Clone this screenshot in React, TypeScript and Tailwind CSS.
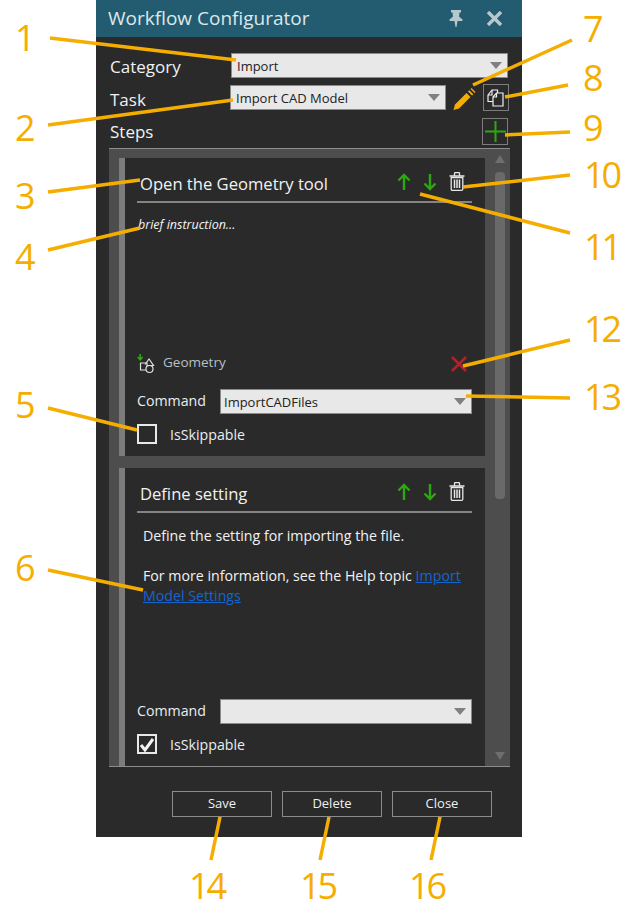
import type { ReactNode } from 'react'

const ui = "font-['Open_Sans',sans-serif]"

const callouts = [
  { text: '1', pos: 'left-[15px] top-[14px]' },
  { text: '2', pos: 'left-[15px] top-[104px]' },
  { text: '3', pos: 'left-[15px] top-[172px]' },
  { text: '4', pos: 'left-[15px] top-[233px]' },
  { text: '5', pos: 'left-[15px] top-[381px]' },
  { text: '6', pos: 'left-[15px] top-[544px]' },
  { text: '7', pos: 'left-[583px] top-[5px]' },
  { text: '8', pos: 'left-[583px] top-[54px]' },
  { text: '9', pos: 'left-[583px] top-[104px]' },
  { text: '10', pos: 'left-[584px] top-[151px]' },
  { text: '11', pos: 'left-[584px] top-[223px]' },
  { text: '12', pos: 'left-[584px] top-[305px]' },
  { text: '13', pos: 'left-[584px] top-[373px]' },
  { text: '14', pos: 'left-[189px] top-[862px]' },
  { text: '15', pos: 'left-[300px] top-[862px]' },
  { text: '16', pos: 'left-[409px] top-[862px]' },
]

const leaders = [
  [50, 38, 236, 60],
  [48, 125, 233, 100],
  [48, 192, 140, 180],
  [48, 250, 140, 228],
  [48, 408, 137, 430],
  [48, 570, 143, 590],
  [572, 40, 473, 85],
  [568, 85, 505, 97],
  [570, 132, 505, 135],
  [570, 175, 463, 187],
  [570, 233, 420, 194],
  [570, 340, 463, 366],
  [570, 398, 466, 396],
  [220, 817, 211, 860],
  [329, 817, 320, 860],
  [440, 817, 431, 860],
]

function Dropdown({ value, className }: { value?: string; className: string }) {
  return (
    <div className={`flex items-center justify-between bg-[#e8e8e8] border border-[#8a8a8a] text-[#222] text-[13px] leading-none pr-[5px] ${className}`}>
      <span className="mt-[2px]">{value}</span>
      <span className="w-0 h-0 border-x-[6px] border-x-transparent border-t-[7px] border-t-[#808080]" />
    </div>
  )
}

function ArrowIcon({ down }: { down?: boolean }) {
  return (
    <svg width="14" height="18" viewBox="0 0 14 18" fill="none" stroke="#2ea80f" strokeWidth="2.4">
      {down ? <path d="M7 1v15M1.5 10.5 7 16l5.5-5.5" /> : <path d="M7 17V2M1.5 7.5 7 2l5.5 5.5" />}
    </svg>
  )
}

function TrashIcon() {
  return (
    <svg width="16" height="19" viewBox="0 0 16 19" fill="none" stroke="#e6e6e6" strokeWidth="1.3">
      <path d="M.5 4h15M5.500 3.500v-2c0-.6.4-1 1-1h3c.6 0 1 .4 1 1v2" />
      <path d="M2.200 5.500h11.600V17c0 .8-.5 1.300-1.300 1.300h-9c-.8 0-1.300-.5-1.300-1.300z" />
      <path d="M5.500 7.500v8.500M8 7.500v8.500M10.500 7.500v8.500" strokeWidth="1.5" />
    </svg>
  )
}

function GeometryIcon() {
  return (
    <svg width="20" height="20" viewBox="0 0 20 20" fill="none">
      <path d="M3.200 0v4.500M.8 3l2.400 2.800L5.600 3" stroke="#2ea80f" strokeWidth="1.6" />
      <path d="M3.500 9H10v7H3.500z" stroke="#e0e0e0" strokeWidth="1.2" />
      <path d="M8 10.500l4-5.500 4.500 6.500h-6" stroke="#e0e0e0" strokeWidth="1.2" />
      <circle cx="12.500" cy="15" r="3.500" fill="#2a2a2a" stroke="#e0e0e0" strokeWidth="1.2" />
    </svg>
  )
}

function Step({ title, children, tool, command, skippable }: {
  title: string
  children: ReactNode
  tool?: boolean
  command?: string
  skippable?: boolean
}) {
  return (
    <div className="flex shrink-0 h-[298px]">
      <div className="w-[6px] bg-[#7c7c7c]" />
      <div className="w-[360px] bg-[#2a2a2a] pl-[12px] pr-[13px] flex flex-col">
        <div className="h-[45px] flex items-center border-b-2 border-[#848484] pl-[3px]">
          <span className="flex-1 text-[16.6px] text-[#f2f2f2] mt-[10px]">{title}</span>
          <div className="flex items-center gap-[12px] pr-[7px] pt-[4px]">
            <ArrowIcon />
            <ArrowIcon down />
            <TrashIcon />
          </div>
        </div>
        <div className="h-[147px] pt-[13px] text-[#f2f2f2]">{children}</div>
        <div className="h-[27px] flex items-center justify-between pr-[5px]">
          {tool && (
            <>
              <div className="flex items-center gap-[6px] text-[13.5px] text-[#b8c0c4]">
                <GeometryIcon />
                <span className="-mt-[2px]">Geometry</span>
              </div>
              <svg width="16" height="16" viewBox="0 0 16 16" stroke="#b5202a" strokeWidth="2.6">
                <path d="M1 1l14 14M15 1 1 15" />
              </svg>
            </>
          )}
        </div>
        <div className="mt-[12px] flex items-center gap-[13px]">
          <span className="w-[70px] text-[14.2px] text-[#e8eef2] -mt-[2px]">Command</span>
          <Dropdown value={command} className="w-[252px] h-[25px] pl-[3px]" />
        </div>
        <div className="mt-[9px] flex items-center gap-[13px]">
          <div className="w-[20px] h-[20px] border-2 border-[#e8e8e8] flex items-center justify-center">
            {skippable && (
              <svg width="16" height="15" viewBox="0 0 16 15" fill="none" stroke="#f2f2f2" strokeWidth="3">
                <path d="M2 8l4 5 8-11" />
              </svg>
            )}
          </div>
          <span className="text-[14.2px] text-[#e8eef2] mt-[1px]">IsSkippable</span>
        </div>
      </div>
    </div>
  )
}

export default function App() {
  return (
    <div className={`relative w-[637px] h-[913px] bg-white overflow-hidden ${ui}`}>
      <div className="ml-[96px] w-[426px] h-[837px] bg-[#2a2a2a] flex flex-col">
        {/* title bar */}
        <div className="h-[37px] shrink-0 bg-[#235c70] flex items-center pl-[12px] pr-[20px] text-[#dbe8ec]">
          <span className="flex-1 text-[19px]">Workflow Configurator</span>
          <svg width="14" height="17" viewBox="0 0 14 17" fill="#b4c8ce" className="mr-[24px]">
            <path d="M2 0h10v2.500h-1.500L10 6.500l3.500 3V11H8.500l-1 6h-1l-1-6H.5V9.500l3.500-3-.5-4H2z" />
          </svg>
          <svg width="15" height="15" viewBox="0 0 15 15" stroke="#b4c8ce" strokeWidth="3.4">
            <path d="M1 1l13 13M14 1 1 14" />
          </svg>
        </div>

        {/* form */}
        <div className="mt-[16px] pl-[14px] flex items-center h-[24px]">
          <span className="w-[121px] text-[17px] text-[#eef2f4] mt-[4px]">Category</span>
          <Dropdown value="Import" className="w-[277px] h-[25px] pl-[5px]" />
        </div>
        <div className="mt-[7px] pl-[14px] flex items-center h-[27px]">
          <span className="w-[120px] text-[17px] text-[#eef2f4] mt-[4px]">Task</span>
          <Dropdown value="Import CAD Model" className="w-[216px] h-[25px] pl-[5px]" />
          <svg width="24" height="24" viewBox="0 0 24 24" className="ml-[6px] mt-[2px]" fill="#f5ae00">
            <path d="M1.500 23l1.500-5.500L14.500 6l4 4L7 21.500z" />
            <path d="M16 4.500l1.300-1.300 4 4L20 8.500zM18.500 2l1-1 4 4-1 1z" />
          </svg>
          <div className="ml-[7px] w-[26px] h-[27px] border border-[#7d7d7d] flex items-center justify-center">
            <svg width="18" height="18" viewBox="0 0 18 18" fill="#2a2a2a" stroke="#f0f0f0" strokeWidth="1.2">
              <path d="M1 6l4-5h5.500v11.500H1z" />
              <path d="M5 1v5H1" fill="none" />
              <path d="M6 8l3.500-4H16v13H6z" />
              <path d="M9.500 4v4H6" fill="none" />
            </svg>
          </div>
        </div>
        <div className="mt-[7px] pl-[14px] pr-[14px] flex items-center justify-between h-[27px]">
          <span className="text-[17px] text-[#eef2f4] mt-[1px]">Steps</span>
          <div className="w-[26px] h-[27px] border border-[#7d7d7d] flex items-center justify-center">
            <svg width="21" height="21" viewBox="0 0 21 21" stroke="#2ea80f" strokeWidth="2">
              <path d="M10.500 0v21M0 10.500h21" />
            </svg>
          </div>
        </div>

        {/* steps list */}
        <div className="mt-[3px] ml-[13px] w-[401px] h-[619px] bg-[#4d4d4d] border-t border-b border-[#8c8c8c] flex">
          <div className="pl-[10px] pt-[9px] flex flex-col gap-[12px] overflow-hidden">
            <Step title="Open the Geometry tool" tool command="ImportCADFiles">
              <p className="text-[12.5px] italic font-medium text-[#f5f5f5] pl-[1px]">brief instruction...</p>
            </Step>
            <Step title="Define setting" skippable>
              <div className="pl-[6px] text-[14.2px] leading-[20px]">
                <p>Define the setting for importing the file.</p>
                <p className="mt-[20px]">
                  For more information, see the Help topic <span className="text-[#1565cf] underline">Import</span>
                </p>
                <p className="text-[#1565cf] underline">Model Settings</p>
              </div>
            </Step>
          </div>
          {/* scrollbar */}
          <div className="flex-1 flex flex-col items-center justify-between pl-[5px] pt-[6px] pb-[6px] relative">
            <div className="w-0 h-0 border-x-[5px] border-x-transparent border-b-[8px] border-b-[#6e6e6e]" />
            <div className="absolute left-[10px] top-[23px] w-[10px] h-[327px] rounded-[4px] bg-[#696969]" />
            <div className="w-0 h-0 border-x-[5px] border-x-transparent border-t-[8px] border-t-[#6e6e6e]" />
          </div>
        </div>

        {/* footer buttons */}
        <div className="mt-[24px] ml-[76px] flex gap-[10px]">
          {['Save', 'Delete', 'Close'].map(label => (
            <div key={label} className="w-[100px] h-[26px] border border-[#8c8c8c] flex items-center justify-center text-[13px] text-[#eef2f4]">
              {label}
            </div>
          ))}
        </div>
      </div>

      {/* callout lines and numbers */}
      <svg width="637" height="913" viewBox="0 0 637 913" className="absolute left-0 top-0 pointer-events-none" stroke="#f5ae00" strokeWidth="3.5">
        {leaders.map(([x1, y1, x2, y2], i) => (
          <line key={i} x1={x1} y1={y1} x2={x2} y2={y2} />
        ))}
      </svg>
      {callouts.map(c => (
        <span key={c.text} className={`absolute ${c.pos} text-[36px] tracking-[-3px] leading-[48px] text-[#f5ae00]`}>
          {c.text}
        </span>
      ))}
    </div>
  )
}
